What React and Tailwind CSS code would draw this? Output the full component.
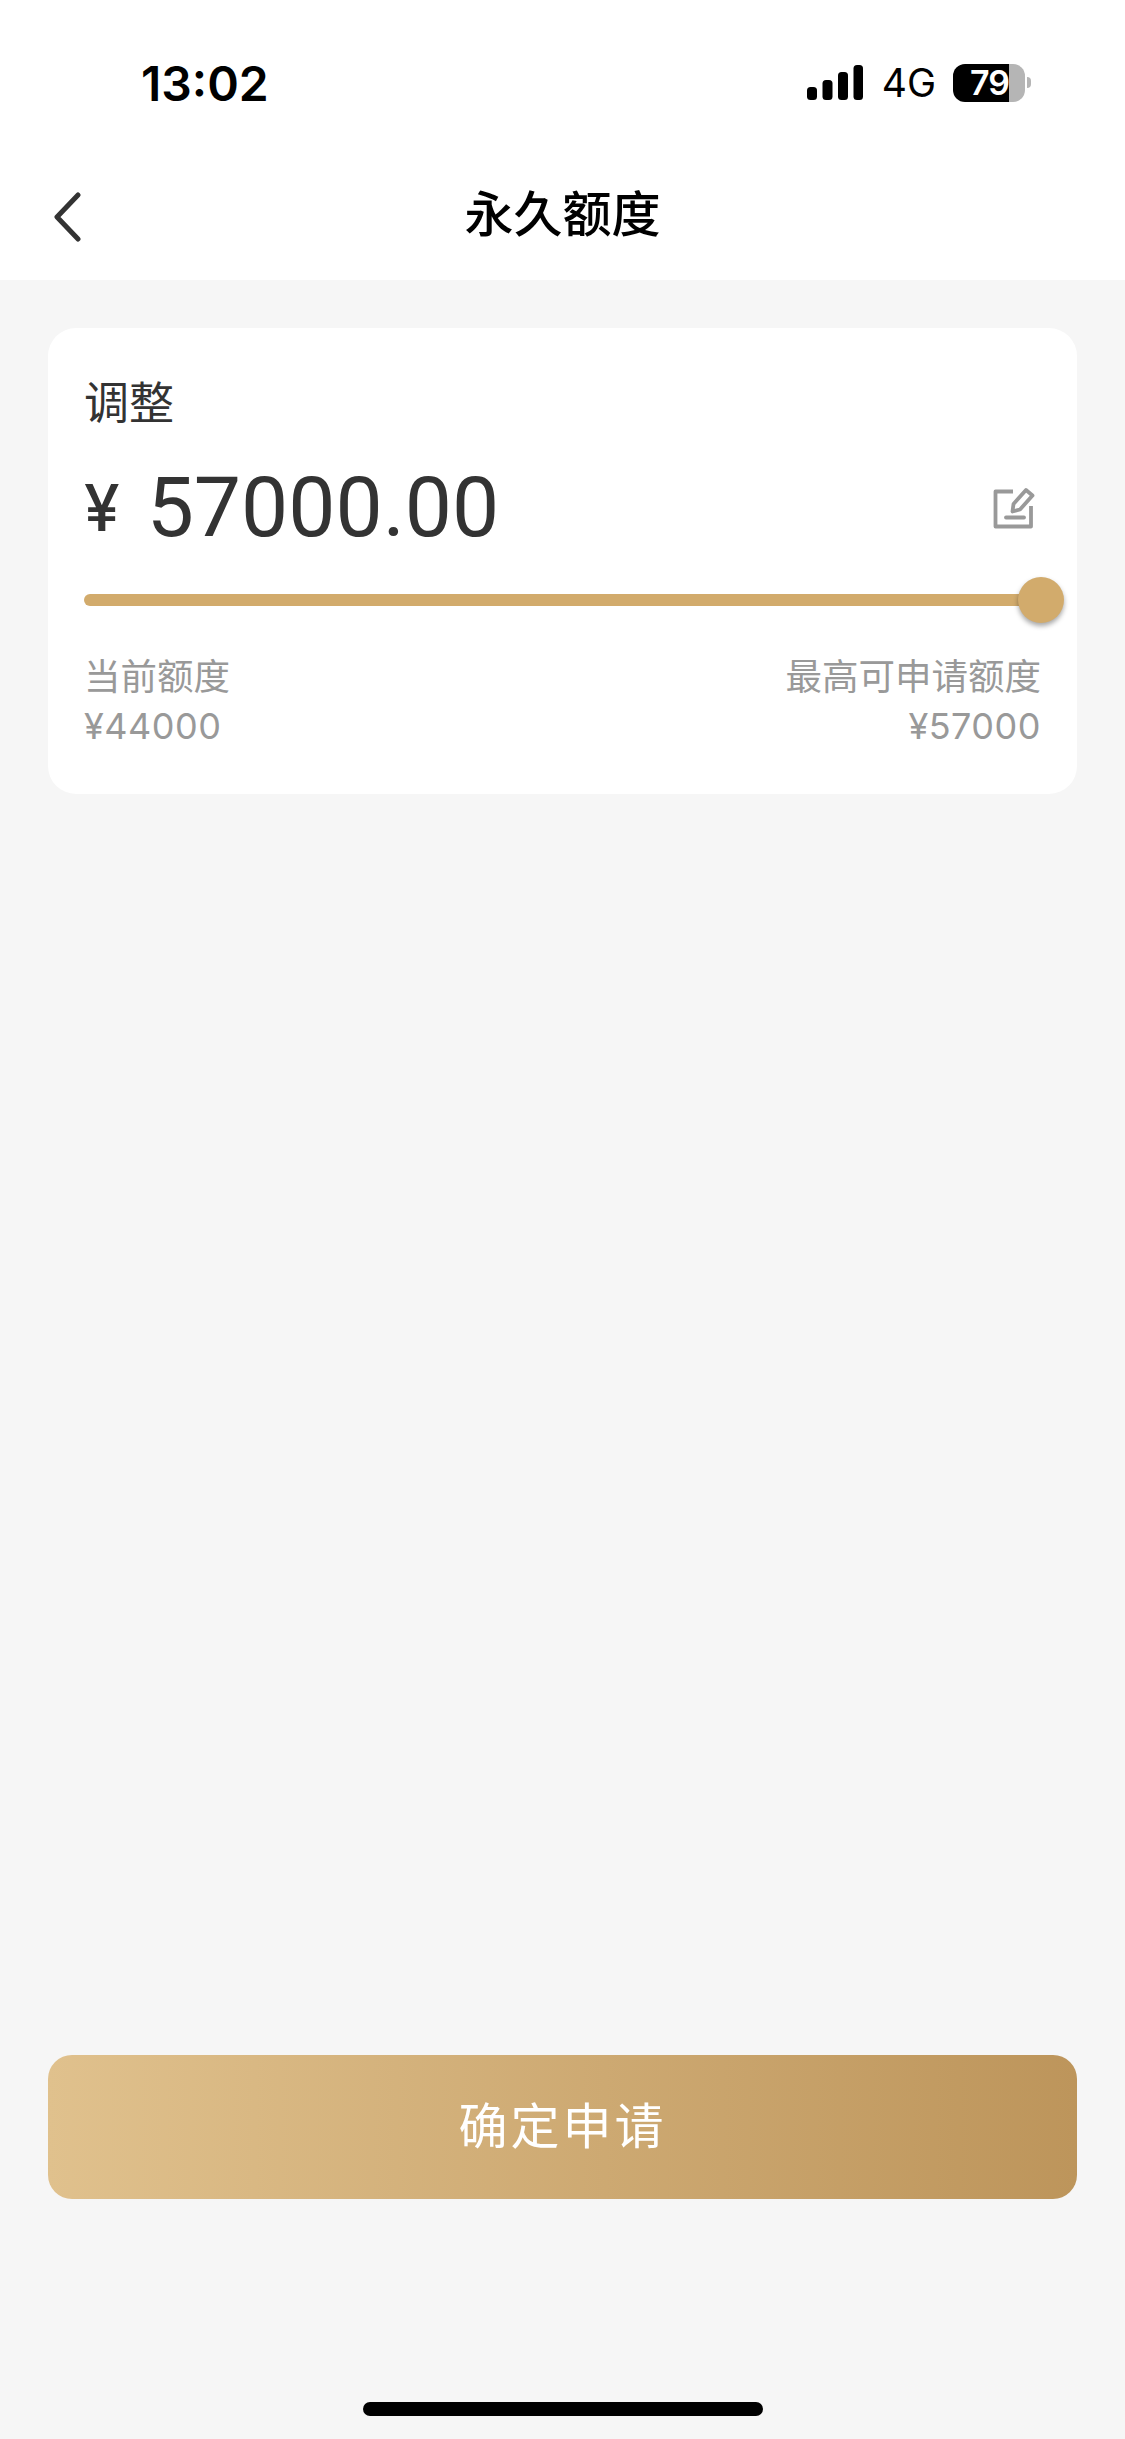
const CJK = "font-['Inter','Noto_Sans_CJK_SC',sans-serif]";

function SignalIcon() {
  return (
    <svg width="56" height="35" viewBox="0 0 56 35" fill="#000">
      <rect x="0" y="22" width="10" height="13" rx="3.5" />
      <rect x="15.5" y="15" width="10" height="20" rx="3.5" />
      <rect x="31" y="7" width="10" height="28" rx="3.5" />
      <rect x="46.5" y="0" width="9.5" height="35" rx="3.5" />
    </svg>
  );
}

function Battery() {
  return (
    <div className="flex items-center">
      <div className="flex h-[38px] w-[72px]">
        <div className="flex w-[56px] items-center justify-end rounded-l-[12px] bg-black">
          <span className="font-['Inter',sans-serif] text-[34px] leading-none font-semibold tracking-[-1px] text-white">
            79
          </span>
        </div>
        <div className="w-[16px] rounded-r-[12px] bg-[#b5b5b5]" />
      </div>
      <div className="ml-[2px] h-[11px] w-[4px] rounded-r-full bg-[#b5b5b5]" />
    </div>
  );
}

function EditIcon() {
  return (
    <svg width="42" height="42" viewBox="0 0 42 42" fill="none" stroke="#999999" strokeWidth="3.8">
      <path d="M20 4.5H2.5V39.5H38V19" strokeLinejoin="round" />
      <path d="M13 30.5H31" strokeLinecap="round" />
      <path d="M19.5 24.5L20.5 17L33 3L39.5 8.5L27 22.5Z" strokeLinejoin="round" />
    </svg>
  );
}

export default function App() {
  return (
    <div className={`relative flex h-[2439px] w-[1125px] flex-col overflow-hidden bg-[#f6f6f6] ${CJK}`}>
      {/* Status bar + nav */}
      <header className="h-[280px] bg-white">
        <div className="flex h-[150px] items-start justify-between pt-[60px] pr-[94px] pl-[141px]">
          <span className="font-['Inter',sans-serif] text-[48px] leading-[48px] font-semibold text-black">13:02</span>
          <div className="flex items-center pt-[3px]">
            <SignalIcon />
            <span className="mr-[17px] ml-[19px] font-['Inter',sans-serif] text-[39px] leading-none text-black">4G</span>
            <Battery />
          </div>
        </div>
        <div className="relative flex h-[130px] items-center justify-center">
          <svg className="absolute top-[42px] left-[52px]" width="30" height="50" viewBox="0 0 30 50" fill="none">
            <path d="M26 3L5 25L26 47" stroke="#333333" strokeWidth="5" strokeLinecap="round" strokeLinejoin="round" />
          </svg>
          <h1 className="text-[49px] leading-[70px] font-medium text-black">永久额度</h1>
        </div>
      </header>

      <main className="flex flex-1 flex-col px-[48px] pt-[48px]">
        {/* Card */}
        <section className="rounded-[28px] bg-white pt-[46px] pr-[36px] pb-[46px] pl-[36px]">
          <div className="text-[45px] leading-[60px] text-[#333333]">调整</div>
          <div className="mt-[24px] flex h-[100px] items-center justify-between pr-[6px]">
            <div className="flex items-center text-[#333333]">
              <span className="font-['Inter',sans-serif] text-[64px] leading-none font-medium">¥</span>
              <span className="ml-[27px] font-['Roboto',sans-serif] text-[84px] leading-none font-[430]">57000.00</span>
            </div>
            <EditIcon />
          </div>
          {/* Slider */}
          <div className="relative mt-[36px] h-[12px] rounded-full bg-[#d2ab6c]">
            <div className="absolute top-1/2 right-[-23px] h-[46px] w-[46px] -translate-y-1/2 rounded-full bg-[#d2ab6c] shadow-[0_3px_5px_rgba(0,0,0,0.35)]" />
          </div>
          <div className="mt-[49px] flex justify-between text-[36.5px] leading-[44px] text-[#999999]">
            <div className="flex flex-col gap-[5px]">
              <span>当前额度</span>
              <span className="text-[36px] tracking-[0.5px]">¥44000</span>
            </div>
            <div className="flex flex-col items-end gap-[5px]">
              <span>最高可申请额度</span>
              <span className="text-[36px] tracking-[0.5px]">¥57000</span>
            </div>
          </div>
        </section>

        {/* Submit */}
        <button
          type="button"
          className="mt-auto mb-[240px] h-[144px] rounded-[24px] bg-gradient-to-r from-[#e0c18d] to-[#bd955b] text-[49px] tracking-[3px] text-white"
        >
          确定申请
        </button>
      </main>

      {/* Home indicator */}
      <div className="absolute bottom-[23px] left-[363px] h-[14px] w-[400px] rounded-full bg-black" />
    </div>
  );
}
